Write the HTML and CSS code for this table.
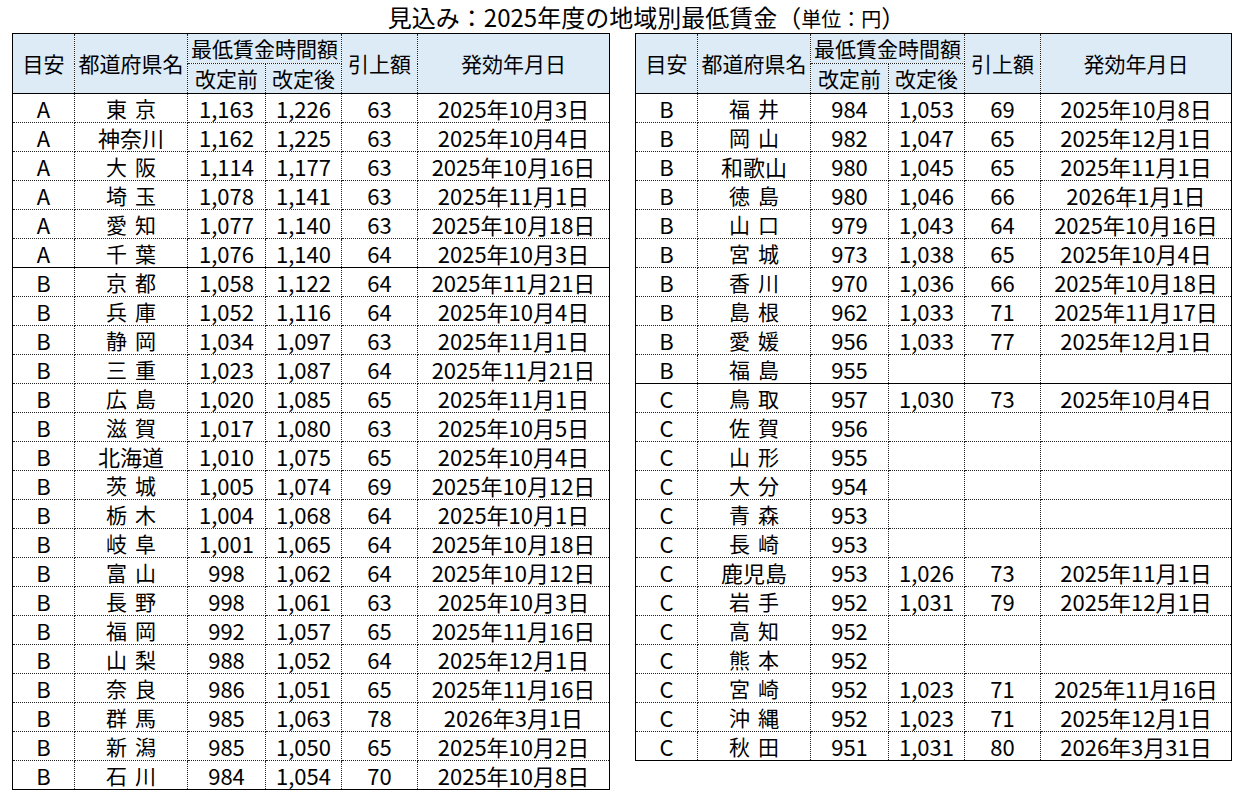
FILE: index.html
```html
<!DOCTYPE html>
<html lang="ja">
<head>
<meta charset="utf-8">
<title>見込み：2025年度の地域別最低賃金</title>
<link rel="stylesheet" href="styles.css">
</head>
<body>
<div class="title">見込み：2025年度の地域別最低賃金（<span class="unit">単位：円</span>）</div>
<div class="tables">
<table class="wage">
<colgroup><col class="c1"><col class="c2"><col class="c3"><col class="c4"><col class="c5"><col class="c6"></colgroup>
<thead>
<tr><th rowspan="2">目安</th><th rowspan="2">都道府県名</th><th colspan="2">最低賃金時間額</th><th rowspan="2">引上額</th><th rowspan="2">発効年月日</th></tr>
<tr><th>改定前</th><th>改定後</th></tr>
</thead>
<tbody>
<tr><td>A</td><td class="n2">東京</td><td>1,163</td><td>1,226</td><td>63</td><td>2025年10月3日</td></tr>
<tr><td>A</td><td>神奈川</td><td>1,162</td><td>1,225</td><td>63</td><td>2025年10月4日</td></tr>
<tr><td>A</td><td class="n2">大阪</td><td>1,114</td><td>1,177</td><td>63</td><td>2025年10月16日</td></tr>
<tr><td>A</td><td class="n2">埼玉</td><td>1,078</td><td>1,141</td><td>63</td><td>2025年11月1日</td></tr>
<tr><td>A</td><td class="n2">愛知</td><td>1,077</td><td>1,140</td><td>63</td><td>2025年10月18日</td></tr>
<tr><td>A</td><td class="n2">千葉</td><td>1,076</td><td>1,140</td><td>64</td><td>2025年10月3日</td></tr>
<tr class="grp"><td>B</td><td class="n2">京都</td><td>1,058</td><td>1,122</td><td>64</td><td>2025年11月21日</td></tr>
<tr><td>B</td><td class="n2">兵庫</td><td>1,052</td><td>1,116</td><td>64</td><td>2025年10月4日</td></tr>
<tr><td>B</td><td class="n2">静岡</td><td>1,034</td><td>1,097</td><td>63</td><td>2025年11月1日</td></tr>
<tr><td>B</td><td class="n2">三重</td><td>1,023</td><td>1,087</td><td>64</td><td>2025年11月21日</td></tr>
<tr><td>B</td><td class="n2">広島</td><td>1,020</td><td>1,085</td><td>65</td><td>2025年11月1日</td></tr>
<tr><td>B</td><td class="n2">滋賀</td><td>1,017</td><td>1,080</td><td>63</td><td>2025年10月5日</td></tr>
<tr><td>B</td><td>北海道</td><td>1,010</td><td>1,075</td><td>65</td><td>2025年10月4日</td></tr>
<tr><td>B</td><td class="n2">茨城</td><td>1,005</td><td>1,074</td><td>69</td><td>2025年10月12日</td></tr>
<tr><td>B</td><td class="n2">栃木</td><td>1,004</td><td>1,068</td><td>64</td><td>2025年10月1日</td></tr>
<tr><td>B</td><td class="n2">岐阜</td><td>1,001</td><td>1,065</td><td>64</td><td>2025年10月18日</td></tr>
<tr><td>B</td><td class="n2">富山</td><td>998</td><td>1,062</td><td>64</td><td>2025年10月12日</td></tr>
<tr><td>B</td><td class="n2">長野</td><td>998</td><td>1,061</td><td>63</td><td>2025年10月3日</td></tr>
<tr><td>B</td><td class="n2">福岡</td><td>992</td><td>1,057</td><td>65</td><td>2025年11月16日</td></tr>
<tr><td>B</td><td class="n2">山梨</td><td>988</td><td>1,052</td><td>64</td><td>2025年12月1日</td></tr>
<tr><td>B</td><td class="n2">奈良</td><td>986</td><td>1,051</td><td>65</td><td>2025年11月16日</td></tr>
<tr><td>B</td><td class="n2">群馬</td><td>985</td><td>1,063</td><td>78</td><td>2026年3月1日</td></tr>
<tr><td>B</td><td class="n2">新潟</td><td>985</td><td>1,050</td><td>65</td><td>2025年10月2日</td></tr>
<tr><td>B</td><td class="n2">石川</td><td>984</td><td>1,054</td><td>70</td><td>2025年10月8日</td></tr>
</tbody>
</table>
<table class="wage right">
<colgroup><col class="c1"><col class="c2"><col class="c3"><col class="c4"><col class="c5"><col class="c6"></colgroup>
<thead>
<tr><th rowspan="2">目安</th><th rowspan="2">都道府県名</th><th colspan="2">最低賃金時間額</th><th rowspan="2">引上額</th><th rowspan="2">発効年月日</th></tr>
<tr><th>改定前</th><th>改定後</th></tr>
</thead>
<tbody>
<tr><td>B</td><td class="n2">福井</td><td>984</td><td>1,053</td><td>69</td><td>2025年10月8日</td></tr>
<tr><td>B</td><td class="n2">岡山</td><td>982</td><td>1,047</td><td>65</td><td>2025年12月1日</td></tr>
<tr><td>B</td><td>和歌山</td><td>980</td><td>1,045</td><td>65</td><td>2025年11月1日</td></tr>
<tr><td>B</td><td class="n2">徳島</td><td>980</td><td>1,046</td><td>66</td><td>2026年1月1日</td></tr>
<tr><td>B</td><td class="n2">山口</td><td>979</td><td>1,043</td><td>64</td><td>2025年10月16日</td></tr>
<tr><td>B</td><td class="n2">宮城</td><td>973</td><td>1,038</td><td>65</td><td>2025年10月4日</td></tr>
<tr><td>B</td><td class="n2">香川</td><td>970</td><td>1,036</td><td>66</td><td>2025年10月18日</td></tr>
<tr><td>B</td><td class="n2">島根</td><td>962</td><td>1,033</td><td>71</td><td>2025年11月17日</td></tr>
<tr><td>B</td><td class="n2">愛媛</td><td>956</td><td>1,033</td><td>77</td><td>2025年12月1日</td></tr>
<tr><td>B</td><td class="n2">福島</td><td>955</td><td></td><td></td><td></td></tr>
<tr class="grp"><td>C</td><td class="n2">鳥取</td><td>957</td><td>1,030</td><td>73</td><td>2025年10月4日</td></tr>
<tr><td>C</td><td class="n2">佐賀</td><td>956</td><td></td><td></td><td></td></tr>
<tr><td>C</td><td class="n2">山形</td><td>955</td><td></td><td></td><td></td></tr>
<tr><td>C</td><td class="n2">大分</td><td>954</td><td></td><td></td><td></td></tr>
<tr><td>C</td><td class="n2">青森</td><td>953</td><td></td><td></td><td></td></tr>
<tr><td>C</td><td class="n2">長崎</td><td>953</td><td></td><td></td><td></td></tr>
<tr><td>C</td><td>鹿児島</td><td>953</td><td>1,026</td><td>73</td><td>2025年11月1日</td></tr>
<tr><td>C</td><td class="n2">岩手</td><td>952</td><td>1,031</td><td>79</td><td>2025年12月1日</td></tr>
<tr><td>C</td><td class="n2">高知</td><td>952</td><td></td><td></td><td></td></tr>
<tr><td>C</td><td class="n2">熊本</td><td>952</td><td></td><td></td><td></td></tr>
<tr><td>C</td><td class="n2">宮崎</td><td>952</td><td>1,023</td><td>71</td><td>2025年11月16日</td></tr>
<tr><td>C</td><td class="n2">沖縄</td><td>952</td><td>1,023</td><td>71</td><td>2025年12月1日</td></tr>
<tr><td>C</td><td class="n2">秋田</td><td>951</td><td>1,031</td><td>80</td><td>2026年3月31日</td></tr>
</tbody>
</table>
</div>
</body>
</html>
```
FILE: styles.css
```css
body {
  margin: 0;
  background: #ffffff;
  color: #000000;
  font-family: "Noto Sans CJK JP", "Noto Sans", sans-serif;
}

.title {
  height: 33px;
  line-height: 33px;
  font-size: 24px;
  text-align: center;
  padding-left: 54px;
  white-space: nowrap;
}

.title .unit {
  font-size: 20px;
}

.tables {
  display: flex;
  align-items: flex-start;
  gap: 25px;
  padding-left: 12px;
}

.wage {
  border-collapse: collapse;
  table-layout: fixed;
  width: 597px;
  border: 1px solid #000;
  font-size: 21px;
}

.wage.right {
  width: 596px;
}

.c1 { width: 62px; }
.c2 { width: 113px; }
.c3 { width: 78px; }
.c4 { width: 76px; }
.c5 { width: 76px; }
.c6 { width: 192px; }
.right .c6 { width: 191px; }

.wage th,
.wage td {
  border: 1px dotted #222;
  padding: 0;
  text-align: center;
  white-space: nowrap;
  overflow: hidden;
}

.wage th {
  background: #ddebf7;
  font-weight: normal;
  line-height: 29px;
}

.wage thead tr:last-child th,
.wage thead th[rowspan] {
  border-bottom: 1px solid #000;
}

.wage td {
  line-height: 28px;
  font-size: 22px;
}

.wage tr.grp td {
  border-top: 1px solid #000;
}

.wage td.n2 {
  font-size: 21px;
  letter-spacing: 8px;
  padding-left: 8px;
}
```
